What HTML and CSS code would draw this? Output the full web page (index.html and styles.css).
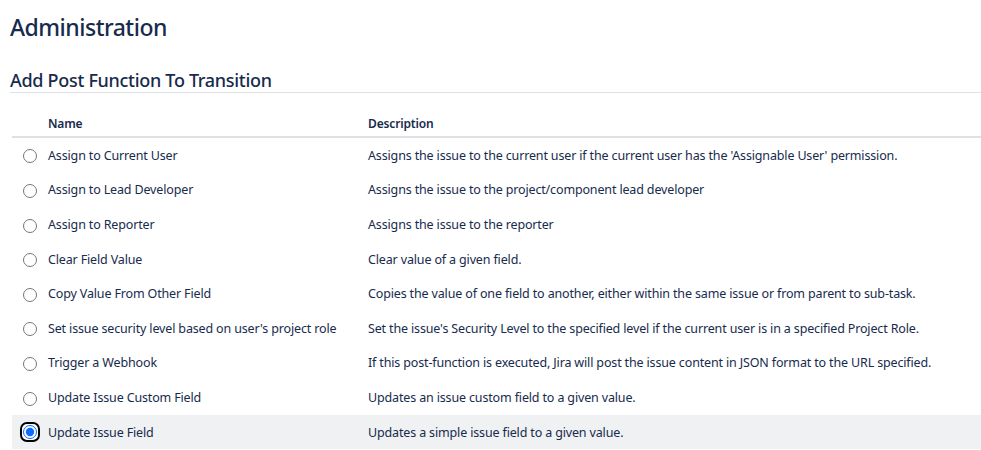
FILE: index.html
```html
<!DOCTYPE html>
<html lang="en">
<head>
  <meta charset="UTF-8" />
  <title>Administration</title>
  <link rel="stylesheet" href="styles.css">
</head>
<body>
  <div id="page">
    <h1 class="page-title">Administration</h1>
    <h2 class="section-title">Add Post Function To Transition</h2>
    <table class="functions">
      <thead>
        <tr>
          <th class="col-radio"></th>
          <th class="col-name">Name</th>
          <th>Description</th>
        </tr>
      </thead>
      <tbody>
        <tr>
          <td class="col-radio"><input type="radio" name="fn" /></td>
          <td class="col-name">Assign to Current User</td>
          <td>Assigns the issue to the current user if the current user has the 'Assignable User' permission.</td>
        </tr>
        <tr>
          <td class="col-radio"><input type="radio" name="fn" /></td>
          <td class="col-name">Assign to Lead Developer</td>
          <td>Assigns the issue to the project/component lead developer</td>
        </tr>
        <tr>
          <td class="col-radio"><input type="radio" name="fn" /></td>
          <td class="col-name">Assign to Reporter</td>
          <td>Assigns the issue to the reporter</td>
        </tr>
        <tr>
          <td class="col-radio"><input type="radio" name="fn" /></td>
          <td class="col-name">Clear Field Value</td>
          <td>Clear value of a given field.</td>
        </tr>
        <tr>
          <td class="col-radio"><input type="radio" name="fn" /></td>
          <td class="col-name">Copy Value From Other Field</td>
          <td>Copies the value of one field to another, either within the same issue or from parent to sub-task.</td>
        </tr>
        <tr>
          <td class="col-radio"><input type="radio" name="fn" /></td>
          <td class="col-name">Set issue security level based on user's project role</td>
          <td>Set the issue's Security Level to the specified level if the current user is in a specified Project Role.</td>
        </tr>
        <tr>
          <td class="col-radio"><input type="radio" name="fn" /></td>
          <td class="col-name">Trigger a Webhook</td>
          <td>If this post-function is executed, Jira will post the issue content in JSON format to the URL specified.</td>
        </tr>
        <tr>
          <td class="col-radio"><input type="radio" name="fn" /></td>
          <td class="col-name">Update Issue Custom Field</td>
          <td>Updates an issue custom field to a given value.</td>
        </tr>
        <tr class="selected">
          <td class="col-radio"><span class="focus-ring"><input type="radio" name="fn" checked /></span></td>
          <td class="col-name">Update Issue Field</td>
          <td>Updates a simple issue field to a given value.</td>
        </tr>
      </tbody>
    </table>
  </div>
</body>
</html>
```

FILE: styles.css
```css
body {
  margin: 0;
  font-family: "Noto Sans", "Open Sans", sans-serif;
  font-size: 12.5px;
  letter-spacing: -0.15px;
  color: #172b4d;
  background-color: #ffffff;
}

#page {
  padding: 9px 0 0 10px;
}

.page-title {
  margin: 0;
  font-size: 23px;
  font-weight: 500;
  letter-spacing: -0.5px;
  line-height: 36px;
  color: #172b4d;
}

.section-title {
  margin: 23px 0 0 0;
  padding-bottom: 0;
  font-size: 18px;
  font-weight: 500;
  letter-spacing: -0.3px;
  line-height: 24px;
  color: #172b4d;
  border-bottom: 1px solid #dfe1e6;
}

.functions {
  margin: 17px 0 0 2px;
  width: calc(100% - 2px);
  border-collapse: collapse;
}

.functions th {
  text-align: left;
  font-size: 12px;
  font-weight: 600;
  color: #172b4d;
  padding: 4px 0;
  height: 18px;
  border-bottom: 2px solid #dfe1e6;
}

.functions td {
  height: 34.6px;
  padding: 0;
  color: #172b4d;
}

.col-radio {
  width: 36px;
  text-align: center;
}

.col-name {
  width: 320px;
}

.functions input[type="radio"] {
  margin: 0;
  width: 14px;
  height: 14px;
  vertical-align: middle;
}

.selected td {
  background-color: #f0f1f3;
}

.selected input[type="radio"] {
  accent-color: #0b6cff;
}

.focus-ring {
  display: inline-block;
  line-height: 0;
  padding: 1px;
  border: 2px solid #000;
  border-radius: 7px;
  background-color: #ffffff;
  vertical-align: middle;
}
```
